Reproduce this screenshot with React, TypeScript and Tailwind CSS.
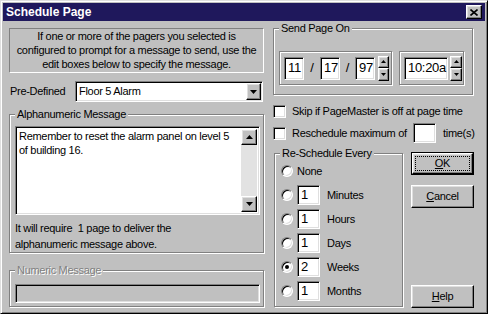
const sunken =
  "border border-t-[#808080] border-l-[#808080] border-b-white border-r-white shadow-[inset_1px_1px_0_#000,inset_-1px_-1px_0_#dfdfdf]";
const raised =
  "border border-t-white border-l-white border-b-black border-r-black shadow-[inset_-1px_-1px_0_#808080,inset_1px_1px_0_#dfdfdf]";
const etched = "border border-[#808080] shadow-[inset_1px_1px_0_#fff,1px_1px_0_#fff]";

const Arrow = ({ up, w = 7, h = 4 }: { up?: boolean; w?: number; h?: number }) => (
  <svg width={w} height={h} viewBox={`0 0 ${w} ${h}`}>
    <polygon
      points={up ? `${w / 2},0 ${w},${h} 0,${h}` : `0,0 ${w},0 ${w / 2},${h}`}
      fill="#000"
    />
  </svg>
);

const Group = ({
  label,
  className,
  disabled,
  children,
}: {
  label: string;
  className: string;
  disabled?: boolean;
  children?: React.ReactNode;
}) => (
  <div className={`relative ${etched} ${className}`}>
    <span
      className={`absolute -top-[8px] left-[5px] bg-[#c0c0c0] px-[2px] leading-[14px] ${
        disabled ? "text-[#808080] [text-shadow:1px_1px_0_#fff]" : ""
      }`}
    >
      {label}
    </span>
    {children}
  </div>
);

const Spinner = ({ w }: { w: string }) => (
  <div className={`flex flex-col ${w} h-[25px]`}>
    <div className={`flex-1 bg-[#c0c0c0] ${raised} flex items-center justify-center`}>
      <Arrow up w={5} h={3} />
    </div>
    <div className={`flex-1 bg-[#c0c0c0] ${raised} flex items-center justify-center`}>
      <Arrow w={5} h={3} />
    </div>
  </div>
);

const Edit = ({ value, w, h = "h-[23px]" }: { value: string; w: string; h?: string }) => (
  <div className={`${w} ${h} bg-white ${sunken} flex items-center pl-[3px] text-[13px]`}>
    {value}
  </div>
);

const Check = () => <div className={`w-[13px] h-[13px] bg-white ${sunken}`} />;

const Radio = ({ on }: { on?: boolean }) => (
  <div
    className={`w-[12px] h-[12px] rounded-full bg-white border border-t-[#808080] border-l-[#808080] border-b-white border-r-white shadow-[inset_1px_1px_0_#000,inset_-1px_-1px_0_#dfdfdf] flex items-center justify-center`}
  >
    {on && <div className="w-[4px] h-[4px] rounded-full bg-black" />}
  </div>
);

const Button = ({ children, focused }: { children: React.ReactNode; focused?: boolean }) =>
  focused ? (
    <div className="h-[23px] border border-black flex">
      <div className={`flex-1 bg-[#c0c0c0] ${raised} p-[2px] flex`}>
        <div className="flex-1 border border-dotted border-black flex items-center justify-center">
          {children}
        </div>
      </div>
    </div>
  ) : (
    <div className={`h-[23px] bg-[#c0c0c0] ${raised} flex items-center justify-center`}>
      {children}
    </div>
  );

const rows = [
  { label: "Minutes", value: "1" },
  { label: "Hours", value: "1" },
  { label: "Days", value: "1" },
  { label: "Weeks", value: "2", on: true },
  { label: "Months", value: "1" },
];

export default function App() {
  return (
    <div className="w-[488px] h-[314px] overflow-hidden bg-[#c0c0c0] font-['Liberation_Sans',Arial,sans-serif] text-[11px] tracking-[-0.3px] text-black border border-t-[#dfdfdf] border-l-[#dfdfdf] border-b-black border-r-black shadow-[inset_1px_1px_0_#fff,inset_-1px_-1px_0_#808080] p-[2px]">
      <div className="h-[18px] bg-[#1f185c] flex items-center justify-between pl-[3px] pr-[3px]">
        <span className="text-white font-bold text-[12px] tracking-normal">Schedule Page</span>
        <div className={`w-[16px] h-[14px] bg-[#c0c0c0] ${raised} flex items-center justify-center`}>
          <svg width="8" height="7" viewBox="0 0 8 7">
            <path d="M0.5 0.5 L7.5 6.5 M7.5 0.5 L0.5 6.5" stroke="#000" strokeWidth="1.6" />
          </svg>
        </div>
      </div>

      <div className="flex pl-[6px] pt-[7px]">
        {/* left column */}
        <div className="w-[255px] flex flex-col">
          <div className="h-[45px] border border-t-[#808080] border-l-[#808080] border-b-white border-r-white text-center leading-[14px]">
            If one or more of the pagers you selected is
            <br />
            configured to prompt for a message to send, use the
            <br />
            edit boxes below to specify the message.
          </div>

          <div className="mt-[8px] h-[21px] flex items-center">
            <span className="w-[66px] pl-px">Pre-Defined</span>
            <div className={`flex-1 mr-[1px] h-[21px] bg-white ${sunken} flex items-center`}>
              <span className="flex-1 pl-[3px]">Floor 5 Alarm</span>
              <div className={`w-[15px] h-[17px] mr-[1px] bg-[#c0c0c0] ${raised} flex items-center justify-center`}>
                <Arrow />
              </div>
            </div>
          </div>

          <Group label="Alphanumeric Message" className="mt-[12px] h-[139px]">
            <div className={`mt-[11px] ml-[5px] mr-[3px] h-[89px] bg-white ${sunken} flex p-[2px]`}>
              <div className="flex-1 pl-px leading-[14px]">
                Remember to reset the alarm panel on level 5
                <br />
                of building 16.
              </div>
              <div className="w-[16px] flex flex-col">
                <div className={`h-[16px] bg-[#c0c0c0] ${raised} flex items-center justify-center`}>
                  <Arrow up />
                </div>
                <div className="flex-1 bg-[#e2e2e2]" />
                <div className={`h-[16px] bg-[#c0c0c0] ${raised} flex items-center justify-center`}>
                  <Arrow />
                </div>
              </div>
            </div>
            <div className="mt-[5px] pl-[5px] leading-[16px]">
              It will require{"\u00a0\u00a0"}1 page to deliver the
              <br />
              alphanumeric message above.
            </div>
          </Group>

          <Group label="Numeric Message" disabled className="mt-[17px] h-[37px]">
            <div className={`mt-[13px] ml-[5px] mr-[3px] h-[19px] bg-[#c0c0c0] ${sunken}`} />
          </Group>
        </div>

        {/* right column */}
        <div className="ml-[9px] w-[204px] flex flex-col">
          <Group label="Send Page On" className="w-[200px] h-[67px]">
            <div className="mt-[22px] ml-[5px] flex gap-[7px]">
              <div className={`${etched} w-[113px] h-[34px] flex items-center pl-[4px]`}>
                <Edit value="11" w="w-[20px]" />
                <span className="w-[16px] text-center text-[13px]">/</span>
                <Edit value="17" w="w-[20px]" />
                <span className="w-[15px] text-center text-[13px]">/</span>
                <Edit value="97" w="w-[20px]" />
                <div className="ml-[3px]">
                  <Spinner w="w-[11px]" />
                </div>
              </div>
              <div className={`${etched} w-[65px] h-[34px] flex items-center pl-[4px]`}>
                <Edit value="10:20a" w="w-[44px]" />
                <div className="ml-[2px]">
                  <Spinner w="w-[12px]" />
                </div>
              </div>
            </div>
          </Group>

          <div className="mt-[10px] h-[13px] flex items-center gap-[6px]">
            <Check />
            <span>Skip if PageMaster is off at page time</span>
          </div>

          <div className="mt-[5px] h-[20px] flex items-center">
            <Check />
            <span className="ml-[6px] w-[121px]">Reschedule maximum of</span>
            <div className={`w-[23px] h-[20px] bg-white ${sunken}`} />
            <span className="ml-[7px]">time(s)</span>
          </div>

          <div className="mt-[10px] flex items-start">
            <Group label="Re-Schedule Every" className="ml-px w-[129px] h-[154px]">
              <div className="pt-[7px] pl-[6px] flex flex-col gap-[4px]">
                <div className="h-[20px] flex items-center">
                  <Radio />
                  <span className="ml-[4px]">None</span>
                </div>
                {rows.map((r) => (
                  <div key={r.label} className="h-[20px] flex items-center">
                    <Radio on={r.on} />
                    <div className="ml-[4px]">
                      <Edit value={r.value} w="w-[23px]" h="h-[20px]" />
                    </div>
                    <span className="ml-[7px]">{r.label}</span>
                  </div>
                ))}
              </div>
            </Group>

            <div className="ml-[8px] -mt-px w-[63px] h-[156px] flex flex-col">
              <Button focused>
                <span>
                  <u>O</u>K
                </span>
              </Button>
              <div className="mt-[10px]">
                <Button>
                  <span>
                    <u>C</u>ancel
                  </span>
                </Button>
              </div>
              <div className="mt-auto">
                <Button>
                  <span>
                    <u>H</u>elp
                  </span>
                </Button>
              </div>
            </div>
          </div>
        </div>
      </div>
    </div>
  );
}
